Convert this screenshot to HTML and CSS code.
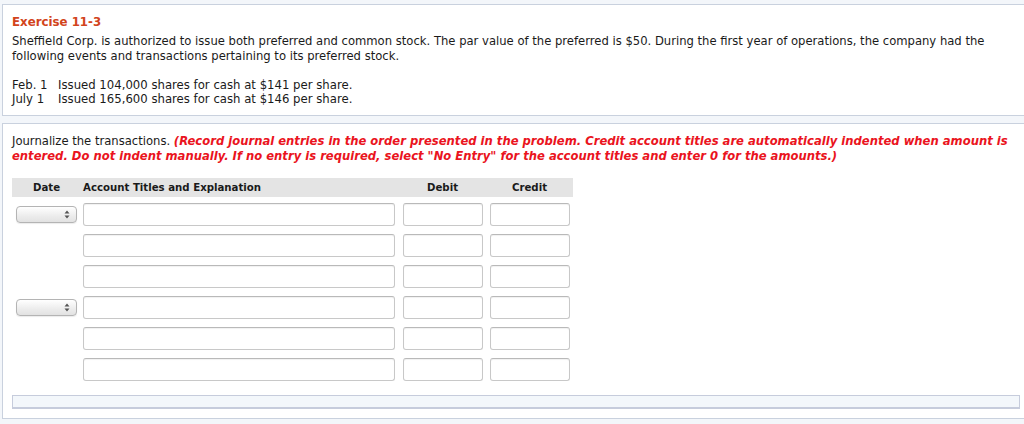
FILE: index.html
```html
<!DOCTYPE html>
<html lang="en">

<head>
    <meta charset="UTF-8">
    <title>Exercise 11-3</title>
    <link rel="stylesheet" href="styles.css">
</head>

<body>
    <div class="page">
        <div class="panel question">
            <h3 class="title">Exercise 11-3</h3>
            <p>Sheffield Corp. is authorized to issue both preferred and common stock. The par value of the preferred is $50. During the first year of operations, the company had the following events and transactions pertaining to its preferred stock.</p>
            <table class="events">
                <tr><td>Feb. 1</td><td>Issued 104,000 shares for cash at $141 per share.</td></tr>
                <tr><td>July 1</td><td>Issued 165,600 shares for cash at $146 per share.</td></tr>
            </table>
        </div>

        <div class="panel answer">
            <p>Journalize the transactions. <em class="note">(Record journal entries in the order presented in the problem. Credit account titles are automatically indented when amount is</em><br>
            <em class="note">entered. Do not indent manually. If no entry is required, select "No Entry" for the account titles and enter 0 for the amounts.)</em></p>

            <table class="journal">
                <thead>
                    <tr>
                        <th class="c-date">Date</th>
                        <th class="c-acct">Account Titles and Explanation</th>
                        <th class="c-amt">Debit</th>
                        <th class="c-amt">Credit</th>
                    </tr>
                </thead>
                <tbody>
                    <!-- entry 1 -->
                    <tr>
                        <td class="c-date">
                            <span class="select">
                                <svg width="6" height="9" viewBox="0 0 6 9"><path d="M3 0.5 L5.5 3.5 H0.5 Z M3 8.5 L5.5 5.5 H0.5 Z" fill="#555"/></svg>
                            </span>
                        </td>
                        <td class="c-acct"><input type="text" class="field"></td>
                        <td class="c-amt"><input type="text" class="field"></td>
                        <td class="c-amt"><input type="text" class="field"></td>
                    </tr>
                    <tr>
                        <td class="c-date"></td>
                        <td class="c-acct"><input type="text" class="field"></td>
                        <td class="c-amt"><input type="text" class="field"></td>
                        <td class="c-amt"><input type="text" class="field"></td>
                    </tr>
                    <tr>
                        <td class="c-date"></td>
                        <td class="c-acct"><input type="text" class="field"></td>
                        <td class="c-amt"><input type="text" class="field"></td>
                        <td class="c-amt"><input type="text" class="field"></td>
                    </tr>
                    <!-- entry 2 -->
                    <tr>
                        <td class="c-date">
                            <span class="select">
                                <svg width="6" height="9" viewBox="0 0 6 9"><path d="M3 0.5 L5.5 3.5 H0.5 Z M3 8.5 L5.5 5.5 H0.5 Z" fill="#555"/></svg>
                            </span>
                        </td>
                        <td class="c-acct"><input type="text" class="field"></td>
                        <td class="c-amt"><input type="text" class="field"></td>
                        <td class="c-amt"><input type="text" class="field"></td>
                    </tr>
                    <tr>
                        <td class="c-date"></td>
                        <td class="c-acct"><input type="text" class="field"></td>
                        <td class="c-amt"><input type="text" class="field"></td>
                        <td class="c-amt"><input type="text" class="field"></td>
                    </tr>
                    <tr>
                        <td class="c-date"></td>
                        <td class="c-acct"><input type="text" class="field"></td>
                        <td class="c-amt"><input type="text" class="field"></td>
                        <td class="c-amt"><input type="text" class="field"></td>
                    </tr>
                </tbody>
            </table>

            <div class="footer-bar"></div>
        </div>
    </div>
</body>

</html>
```

FILE: styles.css
```css
* {
    margin: 0;
    padding: 0;
    box-sizing: border-box;
}

body {
    background-color: #f3f6fa;
    font-family: 'DejaVu Sans', Verdana, sans-serif;
    font-size: 11.6px;
    color: #1a1a1a;
    overflow: hidden;
}

.page {
    padding: 4px 0 0 2px;
    width: 1060px;
}

.panel {
    background-color: #fff;
    border: 1px solid #c9d1de;
    width: 1040px;
}

.question {
    height: 112px;
    padding: 9px 0 0 9px;
}

.question p {
    width: 1000px;
    line-height: 15px;
}

.title {
    color: #d2441c;
    font-size: 11.8px;
    font-weight: bold;
    line-height: 17px;
    margin-bottom: 3px;
}

.events {
    border-collapse: collapse;
    margin-top: 14px;
    line-height: 14px;
}

.events td {
    padding: 0;
    font-size: 11.7px;
}

.events td:first-child {
    width: 46px;
}

.answer {
    margin-top: 7px;
    height: 296px;
    padding: 10px 0 0 9px;
}

.answer p {
    width: 1010px;
    line-height: 15px;
}

.note {
    color: #ea1320;
    font-weight: bold;
}

.journal {
    border-collapse: collapse;
    margin-top: 14px;
}

.journal th {
    background-color: #e4e4e4;
    height: 19px;
    font-weight: bold;
    font-size: 10.2px;
    padding: 0;
}

.journal td {
    padding: 0;
    height: 31px;
    vertical-align: middle;
}

.journal tbody tr:first-child td {
    height: 33px;
    padding-top: 2px;
}

.c-date {
    width: 68px;
    text-align: center;
}

.journal th.c-date {
    padding-left: 1px;
}

.c-acct {
    width: 319px;
    padding-left: 3px !important;
}

.journal th.c-acct {
    text-align: left;
}

.c-amt {
    width: 87px;
    text-align: center;
}

.journal th.c-amt:last-child {
    width: 86px;
}

.field {
    display: block;
    height: 23px;
    border: 1px solid #c8c8c8;
    border-top-color: #b9b9b9;
    border-radius: 3px;
    box-shadow: inset 0 1px 1px rgba(0, 0, 0, 0.06);
    outline: none;
    background-color: #fff;
}

.c-acct .field {
    width: 312px;
}

.c-amt .field {
    width: 80px;
    margin: 0 auto;
}

.select {
    display: flex;
    align-items: center;
    justify-content: flex-end;
    width: 61px;
    height: 17px;
    margin: 0 0 0 4px;
    padding-right: 6px;
    border: 1px solid #b4b4b4;
    border-radius: 4px;
    background: linear-gradient(#ffffff, #ececec 60%, #e2e2e2);
    box-shadow: 0 1px 1px rgba(0, 0, 0, 0.08);
}

.footer-bar {
    margin-top: 10px;
    width: 1008px;
    height: 14px;
    border: 1px solid #c6ccdc;
    border-bottom-width: 2px;
    background-color: #f3f7fb;
}
```
